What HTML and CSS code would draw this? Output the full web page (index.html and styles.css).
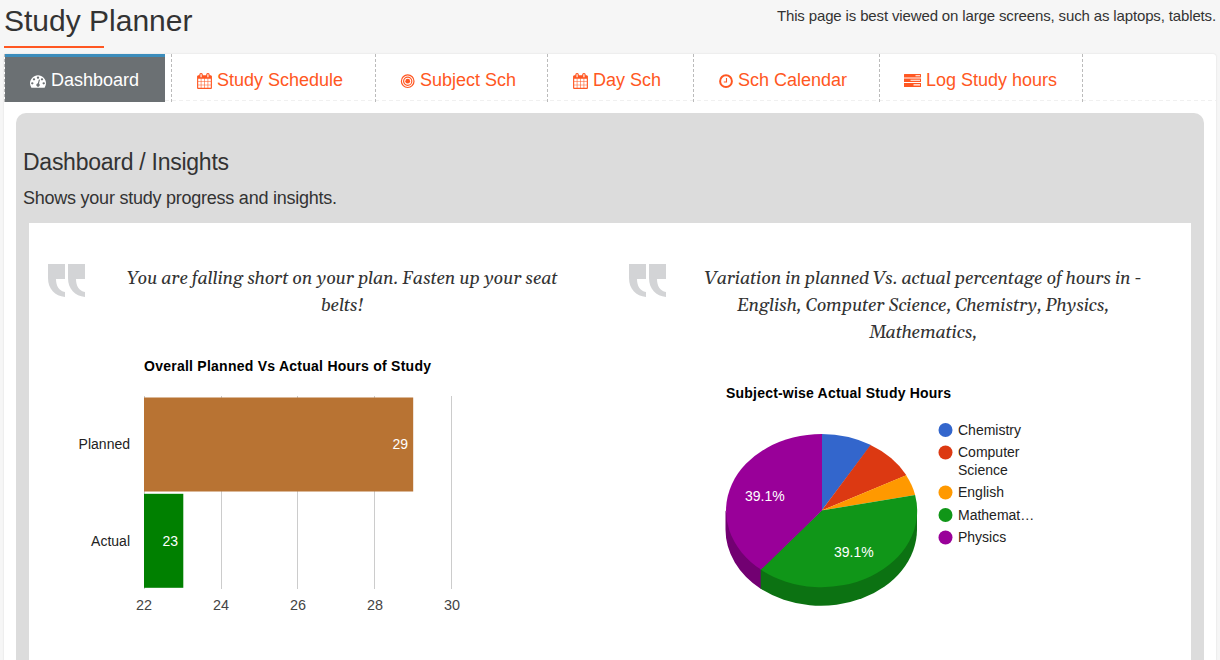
FILE: index.html
```html
<!DOCTYPE html>
<html lang="en">
<head>
<meta charset="utf-8">
<title>Study Planner</title>
<link rel="stylesheet" href="styles.css">
</head>
<body>
<header class="page-header">
  <h1 class="page-title">Study Planner</h1>
  <p class="page-note">This page is best viewed on large screens, such as laptops, tablets.</p>
</header>
<svg class="sprite" aria-hidden="true">
  <symbol id="calendar" viewBox="64 0 1664 1792"><path d="M192 1664h288v-288h-288v288zm352 0h320v-288h-320v288zm-352-352h288v-320h-288v320zm352 0h320v-320h-320v320zm-352-384h288v-288h-288v288zm736 736h320v-288h-320v288zm-384-736h320v-288h-320v288zm768 736h288v-288h-288v288zm-384-352h320v-320h-320v320zm-352-864v-288q0-13-9.500-22.500t-22.500-9.500h-64q-13 0-22.500 9.500t-9.500 22.500v288q0 13 9.500 22.500t22.500 9.500h64q13 0 22.500-9.500t9.500-22.500zm736 864h288v-320h-288v320zm-384-384h320v-288h-320v288zm384 0h288v-288h-288v288zm32-480v-288q0-13-9.500-22.500t-22.500-9.500h-64q-13 0-22.500 9.500t-9.500 22.500v288q0 13 9.500 22.500t22.500 9.500h64q13 0 22.500-9.500t9.500-22.500zm384-64v1280q0 52-38 90t-90 38h-1408q-52 0-90-38t-38-90v-1280q0-52 38-90t90-38h128v-96q0-66 47-113t113-47h64q66 0 113 47t47 113v96h384v-96q0-66 47-113t113-47h64q66 0 113 47t47 113v96h128q52 0 90 38t38 90z"/></symbol>
  <symbol id="quote" viewBox="0 0 37 33"><path d="M0 0H17V15H8C8 22 11 27 17 28V33C7 32 0 25 0 14ZM20 0H37V15H28C28 22 31 27 37 28V33C27 32 20 25 20 14Z"/></symbol>
</svg>
<main class="panel">
  <nav class="tabs">
    <a class="tab tab-active"><svg class="icon" width="16" height="16" viewBox="0 0 1792 1792"><path d="M384 1152q0-53-37.500-90.500t-90.500-37.500-90.500 37.500-37.500 90.500 37.500 90.500 90.500 37.500 90.500-37.500 37.500-90.500zm192-448q0-53-37.500-90.500t-90.500-37.500-90.500 37.500-37.500 90.500 37.500 90.500 90.500 37.500 90.500-37.500 37.500-90.500zm428 481l101-382q6-26-7.500-48.500t-38.500-29.500-48 6.500-30 39.500l-101 382q-60 5-107 43.500t-63 98.500q-20 77 20 146t117 89 146-20 89-117q16-60-6-117t-72-91zm660-33q0-53-37.500-90.500t-90.500-37.500-90.500 37.500-37.500 90.500 37.500 90.500 90.500 37.500 90.500-37.500 37.500-90.500zm-640-640q0-53-37.500-90.500t-90.500-37.500-90.500 37.500-37.500 90.500 37.500 90.500 90.500 37.500 90.500-37.500 37.500-90.500zm448 192q0-53-37.500-90.500t-90.500-37.500-90.500 37.500-37.500 90.500 37.500 90.500 90.500 37.500 90.500-37.500 37.500-90.500zm320 448q0 261-141 483-19 29-54 29h-1402q-35 0-54-29-141-221-141-483 0-182 71-348t191-286 286-191 348-71 348 71 286 191 191 286 71 348z"/></svg>Dashboard</a>
    <a class="tab tab-schedule"><svg class="icon" width="15" height="16"><use href="#calendar"/></svg>Study Schedule</a>
    <a class="tab tab-subject"><svg class="icon" width="14" height="16" viewBox="0 0 14 16"><g fill="none" stroke="currentColor" stroke-width="1.200"><circle cx="6.700" cy="8.200" r="6.300"/><circle cx="6.700" cy="8.200" r="4.100"/></g><circle cx="6.700" cy="8.200" r="2.400"/></svg>Subject Sch</a>
    <a class="tab tab-day"><svg class="icon" width="15" height="16"><use href="#calendar"/></svg>Day Sch</a>
    <a class="tab tab-calendar"><svg class="icon" width="14" height="16" viewBox="0 0 14 16"><circle cx="7" cy="8.200" r="5.900" fill="none" stroke="currentColor" stroke-width="2"/><path d="M7.500 5V9H4.800" fill="none" stroke="currentColor" stroke-width="1.100"/></svg>Sch Calendar</a>
    <a class="tab tab-log"><svg class="icon" width="17" height="16" viewBox="0 1 17 16"><path fill-rule="evenodd" d="M.5 2H16.500Q17 2 17 2.500V5.500H0V2.500Q0 2 .5 2ZM11.500 3.200V4.300H16V3.200ZM0 6.500H17V10H0ZM6.500 7.700V8.800H16V7.700ZM0 11H17V14.500Q17 15 16.500 15H.5Q0 15 0 14.500ZM9.500 12.300V13.400H16V12.300Z"/></svg>Log Study hours</a>
    <span class="tabs-end"></span>
  </nav>
  <section class="dashboard">
    <h2 class="section-title">Dashboard / Insights</h2>
    <p class="section-note">Shows your study progress and insights.</p>
    <div class="insights">
      <article class="insight">
        <blockquote class="quote">
          <svg class="quote-mark" width="37" height="33"><use href="#quote"/></svg>
          <p class="quote-text">You are falling short on your plan. Fasten up your seat<br>belts!</p>
        </blockquote>
        <svg class="chart" width="581" height="290" viewBox="29 340 581 290">
          <text class="chart-title" x="144" y="371" textLength="287">Overall Planned Vs Actual Hours of Study</text>
          <path class="grid" d="M144.500 396V589M221.500 396V589M297.500 396V589M374.500 396V589M451.500 396V589"/>
          <rect x="144" y="397.500" width="269.200" height="94" fill="#b87333"/>
          <rect x="144" y="493.800" width="39.300" height="94" fill="#008000"/>
          <g class="label end"><text x="130" y="449">Planned</text><text x="130" y="546">Actual</text></g>
          <g class="value end"><text x="408" y="449">29</text><text x="178" y="546">23</text></g>
          <g class="axis"><text x="144" y="610">22</text><text x="221" y="610">24</text><text x="298" y="610">26</text><text x="375" y="610">28</text><text x="452" y="610">30</text></g>
        </svg>
      </article>
      <article class="insight">
        <blockquote class="quote">
          <svg class="quote-mark" width="37" height="33"><use href="#quote"/></svg>
          <p class="quote-text">Variation in planned Vs. actual percentage of hours in -<br>English, Computer Science, Chemistry, Physics,<br>Mathematics,</p>
        </blockquote>
        <svg class="chart" width="581" height="263" viewBox="610 367 581 263">
          <text class="chart-title" x="726" y="398" textLength="225">Subject-wise Actual Study Hours</text>
          <path fill="#720072" d="M725.500 510.500V529.500A96 76.500 0 0 0 761 588.900V569.500Z"/>
          <path fill="#0c7212" d="M760.700 569V588.700A96 76.500 0 0 0 917 529.500V510.500H822Z"/>
          <path fill="#3366cc" d="M821.700 510.500V434A95.500 76.500 0 0 1 871 445.100Z"/>
          <path fill="#dc3912" d="M821.700 510.500L870.500 445.100A95.500 76.500 0 0 1 906.400 475.300Z"/>
          <path fill="#ff9900" d="M821.700 510.500L906.100 475.300A95.500 76.500 0 0 1 915.100 494.900Z"/>
          <path fill="#109618" d="M821.700 510.500L915.100 494.900A95.500 76.500 0 0 1 760.700 569.600Z"/>
          <path fill="#990099" d="M822 510.500L761 569.600A95.800 76.500 0 0 1 822 434Z"/>
          <g class="value"><text x="745" y="501">39.1%</text><text x="834" y="557">39.1%</text></g>
          <circle cx="945.500" cy="430" r="7" fill="#3366cc"/><circle cx="945.500" cy="452.500" r="7" fill="#dc3912"/><circle cx="945.500" cy="492.500" r="7" fill="#ff9900"/><circle cx="945.500" cy="515" r="7" fill="#109618"/><circle cx="945.500" cy="537.500" r="7" fill="#990099"/>
          <g class="label"><text x="958" y="435">Chemistry</text><text x="958" y="457">Computer</text><text x="958" y="475">Science</text><text x="958" y="497">English</text><text x="958" y="520">Mathemat…</text><text x="958" y="542">Physics</text></g>
        </svg>
      </article>
    </div>
  </section>
</main>
</body>
</html>
```
FILE: styles.css
```css
* { box-sizing: border-box; }
html { height: 100%; overflow: hidden; }
body {
  margin: 0;
  height: 660px;
  padding: 0 4px;
  overflow: hidden;
  background: #f6f6f6;
  color: #333;
  font-family: "Liberation Sans", Arial, sans-serif;
}
h1, h2, p, blockquote { margin: 0; font-weight: 400; }
.sprite { display: none; }
.page-header { display: flex; justify-content: space-between; height: 54px; }
.page-title {
  height: 48px;
  padding-top: 4px;
  font-size: 30px;
  line-height: 34px;
  background: linear-gradient(#ff5722, #ff5722) 0 100% / 100px 2px no-repeat;
}
.page-note { padding-top: 7px; font-size: 15px; letter-spacing: -.14px; line-height: 18px; white-space: nowrap; }
.panel {
  height: 620px;
  background: #fff;
  border-radius: 3px;
  box-shadow: 0 0 2px rgba(0, 0, 0, .12);
}
.tabs {
  display: flex;
  height: 48px;
  background: repeating-linear-gradient(90deg, #f0f0f0 0 4px, transparent 4px 7px) 0 46px / 100% 1px no-repeat;
}
.tab {
  display: flex;
  align-items: center;
  gap: 5px;
  padding: 4px 0 0 25px;
  border-left: 1px dashed #bbb;
  color: #ff5722;
  font-size: 18px;
  white-space: nowrap;
}
.icon { fill: currentColor; flex: none; overflow: visible; position: relative; top: 1px; }
.tab-active {
  width: 161px;
  margin-right: 6px;
  background: linear-gradient(#3c8dbc, #3c8dbc) 0 0 / 100% 3px no-repeat padding-box, #6b7073 padding-box;
  color: #fff;
}
.tab-schedule { width: 204px; }
.tab-subject { width: 172px; }
.tab-day { width: 146px; }
.tab-calendar { width: 186px; }
.tab-log { width: 203px; padding-left: 24px; }
.tabs-end { border-left: 1px dashed #bbb; }
.dashboard {
  height: 560px;
  margin: 11px 12px 0;
  padding: 35px 13px 0;
  border-radius: 10px 10px 0 0;
  background: #dcdcdc;
}
.section-title { margin-left: -6px; font-size: 23px; letter-spacing: -.26px; line-height: 28px; }
.section-note { margin: 11px 0 0 -6px; font-size: 18px; letter-spacing: -.24px; line-height: 22px; }
.insights { display: grid; grid-template-columns: 1fr 1fr; height: 450px; margin-top: 14px; background: #fff; }
.quote { display: flex; padding: 41px 0 0 19px; }
.quote-mark { fill: #d3d4d6; flex: none; }
.quote-text {
  width: 514px;
  padding: 1px 0 21px;
  font: italic 18px/27px Georgia, Gelasio, "Liberation Serif", serif;
  letter-spacing: -.22px;
  text-align: center;
  white-space: nowrap;
}
.chart { display: block; font-size: 14.400px; }
.chart-title { font-size: 14px; font-weight: 700; fill: #000; }
.grid { stroke: #ccc; stroke-width: 1; }
.label { font-size: 14px; fill: #222; }
.value { font-size: 14px; fill: #fff; }
.axis { fill: #444; text-anchor: middle; }
.end { text-anchor: end; }
```
